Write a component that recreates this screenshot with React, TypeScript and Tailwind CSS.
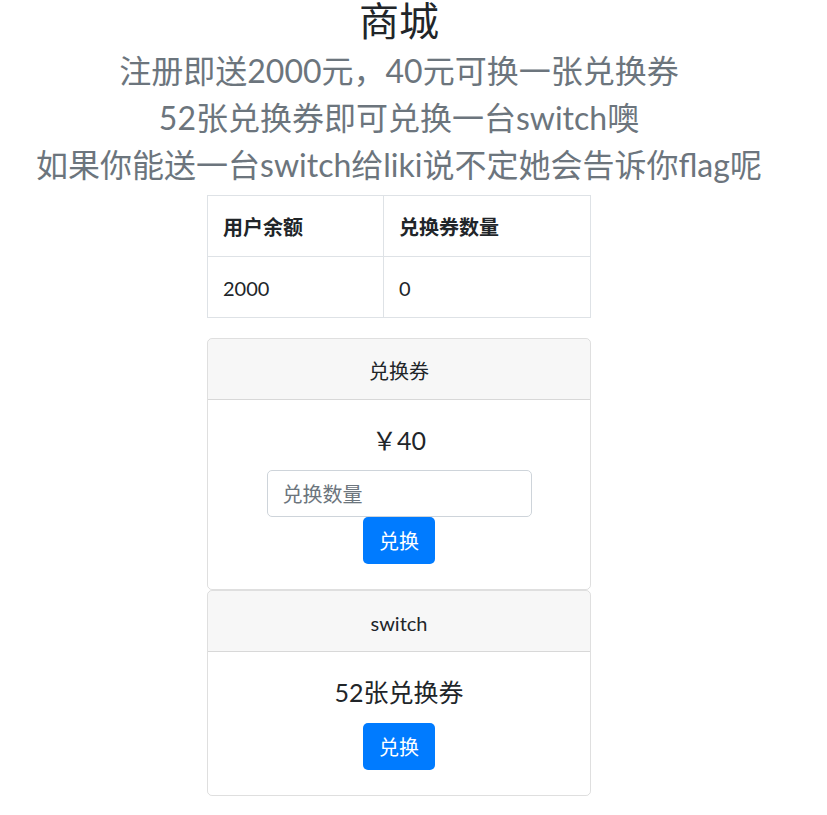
import { useState } from 'react';

const font = { fontFamily: 'Lato, "Noto Sans CJK SC", sans-serif' };

export default function App() {
  const [balance] = useState(2000);
  const [coupons] = useState(0);
  const [amount, setAmount] = useState('');

  return (
    <div className="min-h-screen bg-white pr-[29px] text-center text-[#212529]" style={font}>
      <h1 className="text-[40px] leading-[42px] font-normal mb-[10px]">商城</h1>
      <h2 className="text-[32px] leading-[38px] font-normal text-[#6c757d] mb-[9px]">
        注册即送2000元，40元可换一张兑换券
      </h2>
      <h2 className="text-[32px] leading-[38px] font-normal text-[#6c757d] mb-[9px]">
        52张兑换券即可兑换一台switch噢
      </h2>
      <h2 className="text-[32px] leading-[38px] font-normal text-[#6c757d] mb-[11px]">
        如果你能送一台switch给liki说不定她会告诉你flag呢
      </h2>

      <table className="w-[384px] mx-auto mb-[20px] border-collapse border border-[#dee2e6] text-left text-[20px] leading-[30px]">
        <thead>
          <tr>
            <th className="w-[176px] border border-[#dee2e6] pt-[16px] pb-[14px] px-[15px] font-bold">用户余额</th>
            <th className="border border-[#dee2e6] pt-[16px] pb-[14px] px-[15px] font-bold">兑换券数量</th>
          </tr>
        </thead>
        <tbody>
          <tr>
            <td className="border border-[#dee2e6] pt-[16px] pb-[14px] px-[15px]">{balance}</td>
            <td className="border border-[#dee2e6] pt-[16px] pb-[14px] px-[15px]">{coupons}</td>
          </tr>
        </tbody>
      </table>

      <div className="w-[384px] mx-auto border border-black/[.125] rounded-[5px] overflow-hidden">
        <div className="bg-black/[.03] border-b border-black/[.125] px-[25px] pt-[17px] pb-[13px] text-[20px] leading-[30px]">
          兑换券
        </div>
        <div className="p-[25px]">
          <h5 className="text-[25px] leading-[30px] mb-[15px]">￥40</h5>
          <input
            type="text"
            value={amount}
            onChange={(e) => setAmount(e.target.value)}
            placeholder="兑换数量"
            className="block mx-auto w-[265px] h-[47px] border border-[#ced4da] rounded-[5px] px-[15px] text-[20px] text-[#495057] placeholder:text-[#6c757d] outline-none"
          />
          <button className="block mx-auto w-[72px] h-[47px] bg-[#007bff] text-white text-[20px] leading-[30px] rounded-[5px]">
            兑换
          </button>
        </div>
      </div>

      <div className="w-[384px] mx-auto border border-black/[.125] rounded-[5px] overflow-hidden">
        <div className="bg-black/[.03] border-b border-black/[.125] px-[25px] pt-[17px] pb-[13px] text-[20px] leading-[30px]">
          switch
        </div>
        <div className="p-[25px]">
          <h5 className="text-[25px] leading-[30px] mb-[16px]">52张兑换券</h5>
          <button className="block mx-auto w-[72px] h-[47px] bg-[#007bff] text-white text-[20px] leading-[30px] rounded-[5px]">
            兑换
          </button>
        </div>
      </div>
    </div>
  );
}
